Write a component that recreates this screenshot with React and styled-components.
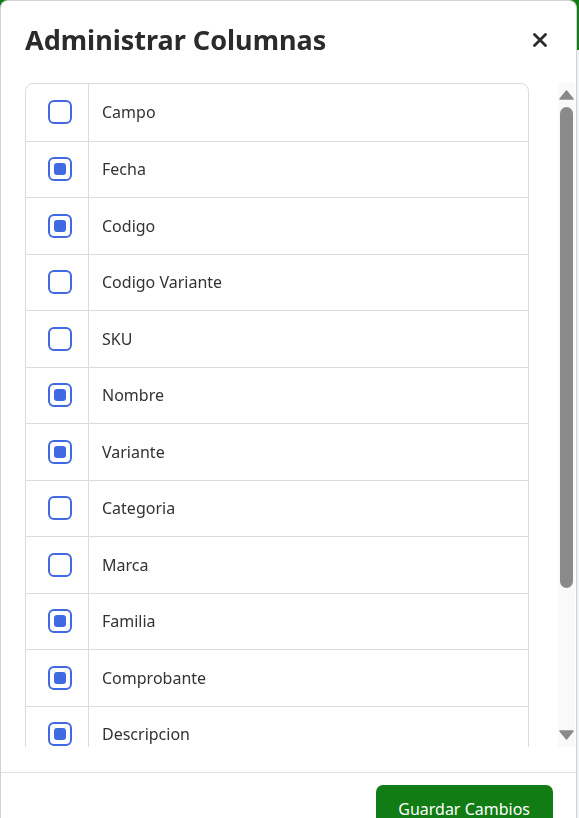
import React, { useLayoutEffect, useRef, useState } from "react";
import styled, { createGlobalStyle } from "styled-components";

const Global = createGlobalStyle`
  * { box-sizing: border-box; }
  html, body { margin: 0; padding: 0; }
  body {
    font-family: "Noto Sans", "Open Sans", sans-serif;
    background: #eef0f2;
    color: #333;
  }
`;

const Page = styled.div`
  min-height: 818px;
`;

const TopBar = styled.header`
  height: 50px;
  background: #117c13;
`;

const Backdrop = styled.div`
  position: fixed;
  inset: 0;
  overflow: hidden;
`;

const Dialog = styled.div`
  position: absolute;
  top: 0;
  left: 0;
  width: 577px;
  background: #fff;
  border: 1px solid rgba(0, 0, 0, 0.175);
  border-radius: 8px;
  display: flex;
  flex-direction: column;
`;

const Header = styled.div`
  display: flex;
  align-items: center;
  justify-content: space-between;
  padding: 21px 24px 25px 24px;
`;

const Title = styled.h2`
  margin: 0;
  font-size: 27px;
  line-height: 36px;
  font-weight: 700;
  color: #2b2b2b;
`;

const CloseButton = styled.button`
  border: 0;
  background: transparent;
  padding: 0;
  width: 20px;
  height: 20px;
  display: flex;
  align-items: center;
  justify-content: center;
  cursor: pointer;
  margin-right: 2px;
  color: #2b2b2b;
`;

const Body = styled.div`
  display: flex;
  padding: 0 1px 25px 24px;
`;

const ScrollArea = styled.div`
  flex: 1;
  height: 664px;
  overflow-y: auto;
  scrollbar-width: none;
  &::-webkit-scrollbar {
    display: none;
  }
`;

const Track = styled.div`
  width: 17px;
  height: 664px;
  background: #f9f9f9;
  display: flex;
  flex-direction: column;
`;

const Arrow = styled.button`
  height: 24px;
  border: 0;
  padding: 0;
  background: transparent;
  color: #8a8a8a;
  display: flex;
  align-items: center;
  justify-content: center;
  cursor: pointer;
  flex: none;
`;

const Rail = styled.div`
  flex: 1;
  position: relative;
`;

const Thumb = styled.div`
  position: absolute;
  left: 2px;
  right: 2px;
  border-radius: 7px;
  background: #8a8a8a;
`;

const List = styled.div`
  width: 504px;
  border: 1px solid #dcdcdc;
  border-radius: 8px;
  overflow: hidden;
`;

const Row = styled.div`
  display: grid;
  grid-template-columns: 63px 1fr;
  height: 56.5px;
  border-top: ${(p) => (p.$first ? "0" : "1px solid #dcdcdc")};
  cursor: pointer;
`;

const CheckCell = styled.div`
  display: flex;
  align-items: center;
  padding-left: 22px;
  border-right: 1px solid #dcdcdc;
`;

const Box = styled.span`
  width: 24px;
  height: 24px;
  border: 2px solid #4169e1;
  border-radius: 6px;
  padding: 4px;
  display: flex;
`;

const Dot = styled.span`
  flex: 1;
  border-radius: 3px;
  background: ${(p) => (p.$on ? "#4169e1" : "transparent")};
`;

const Label = styled.div`
  display: flex;
  align-items: center;
  padding: 0 13px;
  font-size: 16px;
  color: #333;
`;

const Footer = styled.div`
  display: flex;
  justify-content: flex-end;
  padding: 12px 23px 12px 24px;
  border-top: 1px solid #dee2e6;
`;

const SaveButton = styled.button`
  border: 0;
  border-radius: 7px;
  background: #117c13;
  color: #fff;
  font-family: "Noto Sans", "Open Sans", sans-serif;
  font-size: 16px;
  line-height: 24px;
  padding: 12px 23px 12px 22px;
  white-space: nowrap;
  cursor: pointer;
`;

const initial = [
  ["Campo", false],
  ["Fecha", true],
  ["Codigo", true],
  ["Codigo Variante", false],
  ["SKU", false],
  ["Nombre", true],
  ["Variante", true],
  ["Categoria", false],
  ["Marca", false],
  ["Familia", true],
  ["Comprobante", true],
  ["Descripcion", true],
  ["Cantidad", true],
  ["Precio", true],
  ["Total", true],
];

const RAIL = 664 - 48;

export default function App() {
  const [items, setItems] = useState(initial);
  const [metrics, setMetrics] = useState({ top: 0, height: 481 });
  const areaRef = useRef(null);

  const measure = () => {
    const el = areaRef.current;
    if (!el) return;
    const ratio = el.clientHeight / el.scrollHeight;
    const height = Math.max(24, RAIL * ratio);
    const max = el.scrollHeight - el.clientHeight;
    const top = max > 0 ? (el.scrollTop / max) * (RAIL - height) : 0;
    setMetrics({ top, height });
  };

  useLayoutEffect(measure, [items]);

  const toggle = (i) =>
    setItems((prev) => prev.map((it, j) => (j === i ? [it[0], !it[1]] : it)));

  const scrollBy = (d) => areaRef.current && areaRef.current.scrollBy({ top: d });

  return (
    <Page>
      <Global />
      <TopBar />
      <Backdrop>
        <Dialog role="dialog" aria-modal="true">
          <Header>
            <Title>Administrar Columnas</Title>
            <CloseButton aria-label="Cerrar">
              <svg width="14" height="14" viewBox="0 0 14 14">
                <path
                  d="M1.5 1.5 L12.5 12.5 M12.5 1.5 L1.5 12.5"
                  stroke="currentColor"
                  strokeWidth="2.8"
                  strokeLinecap="round"
                />
              </svg>
            </CloseButton>
          </Header>
          <Body>
            <ScrollArea ref={areaRef} onScroll={measure}>
              <List>
                {items.map(([name, on], i) => (
                  <Row key={name} $first={i === 0} onClick={() => toggle(i)}>
                    <CheckCell>
                      <Box role="checkbox" aria-checked={on}>
                        <Dot $on={on} />
                      </Box>
                    </CheckCell>
                    <Label>{name}</Label>
                  </Row>
                ))}
              </List>
            </ScrollArea>
            <Track>
              <Arrow aria-label="Subir" onClick={() => scrollBy(-56)}>
                <svg width="15" height="10" viewBox="0 0 15 10">
                  <path d="M7.5 1 L14 9 L1 9 Z" fill="currentColor" stroke="currentColor" strokeWidth="1.5" strokeLinejoin="round" />
                </svg>
              </Arrow>
              <Rail>
                <Thumb style={{ top: metrics.top, height: metrics.height }} />
              </Rail>
              <Arrow aria-label="Bajar" onClick={() => scrollBy(56)}>
                <svg width="15" height="10" viewBox="0 0 15 10">
                  <path d="M1 1 L14 1 L7.5 9 Z" fill="currentColor" stroke="currentColor" strokeWidth="1.5" strokeLinejoin="round" />
                </svg>
              </Arrow>
            </Track>
          </Body>
          <Footer>
            <SaveButton>Guardar Cambios</SaveButton>
          </Footer>
        </Dialog>
      </Backdrop>
    </Page>
  );
}
